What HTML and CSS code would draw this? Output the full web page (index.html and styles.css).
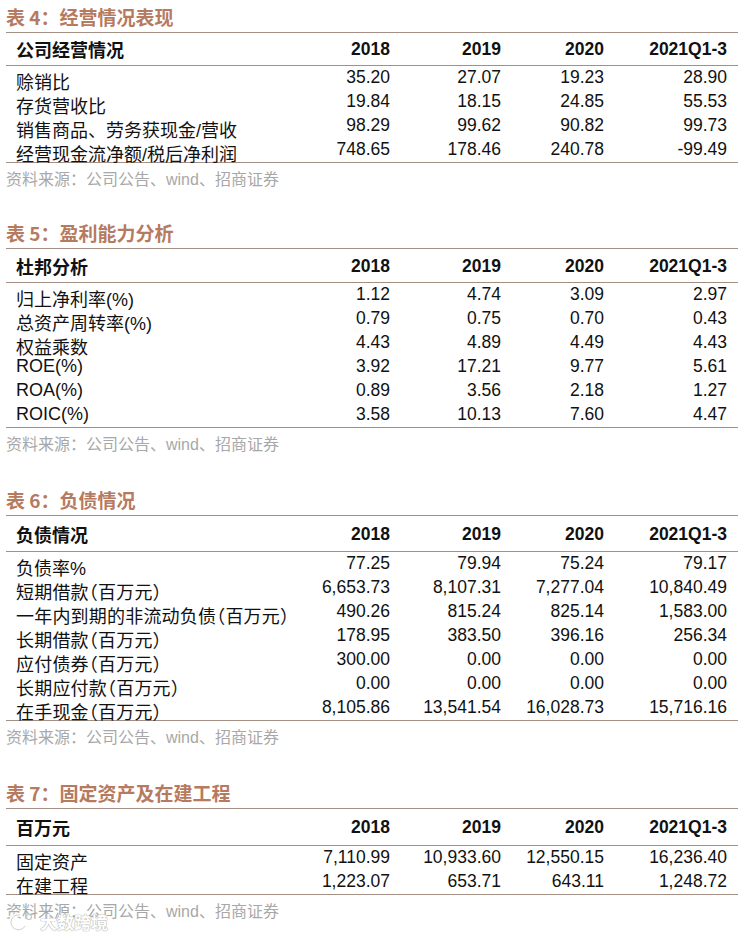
FILE: index.html
```html
<!DOCTYPE html>
<html lang="zh-CN">
<head>
<meta charset="utf-8">
<title>财务表格</title>
<link rel="stylesheet" href="styles.css">
</head>
<body>
<div class="page">

  <section class="block t4">
    <h2 class="title">表 4：经营情况表现</h2>
    <div class="table">
      <div class="row head"><div class="label">公司经营情况</div><div class="num">2018</div><div class="num">2019</div><div class="num">2020</div><div class="num">2021Q1-3</div></div>
      <div class="row"><div class="label cjk">赊销比</div><div class="num">35.20</div><div class="num">27.07</div><div class="num">19.23</div><div class="num">28.90</div></div>
      <div class="row"><div class="label cjk">存货营收比</div><div class="num">19.84</div><div class="num">18.15</div><div class="num">24.85</div><div class="num">55.53</div></div>
      <div class="row"><div class="label cjk">销售商品、劳务获现金/营收</div><div class="num">98.29</div><div class="num">99.62</div><div class="num">90.82</div><div class="num">99.73</div></div>
      <div class="row"><div class="label cjk">经营现金流净额/税后净利润</div><div class="num">748.65</div><div class="num">178.46</div><div class="num">240.78</div><div class="num">-99.49</div></div>
    </div>
    <p class="source">资料来源：公司公告、wind、招商证券</p>
  </section>

  <section class="block t5">
    <h2 class="title">表 5：盈利能力分析</h2>
    <div class="table">
      <div class="row head"><div class="label">杜邦分析</div><div class="num">2018</div><div class="num">2019</div><div class="num">2020</div><div class="num">2021Q1-3</div></div>
      <div class="row"><div class="label cjk">归上净利率(%)</div><div class="num">1.12</div><div class="num">4.74</div><div class="num">3.09</div><div class="num">2.97</div></div>
      <div class="row"><div class="label cjk">总资产周转率(%)</div><div class="num">0.79</div><div class="num">0.75</div><div class="num">0.70</div><div class="num">0.43</div></div>
      <div class="row"><div class="label cjk">权益乘数</div><div class="num">4.43</div><div class="num">4.89</div><div class="num">4.49</div><div class="num">4.43</div></div>
      <div class="row"><div class="label">ROE(%)</div><div class="num">3.92</div><div class="num">17.21</div><div class="num">9.77</div><div class="num">5.61</div></div>
      <div class="row"><div class="label">ROA(%)</div><div class="num">0.89</div><div class="num">3.56</div><div class="num">2.18</div><div class="num">1.27</div></div>
      <div class="row"><div class="label">ROIC(%)</div><div class="num">3.58</div><div class="num">10.13</div><div class="num">7.60</div><div class="num">4.47</div></div>
    </div>
    <p class="source">资料来源：公司公告、wind、招商证券</p>
  </section>

  <section class="block t6">
    <h2 class="title">表 6：负债情况</h2>
    <div class="table">
      <div class="row head"><div class="label">负债情况</div><div class="num">2018</div><div class="num">2019</div><div class="num">2020</div><div class="num">2021Q1-3</div></div>
      <div class="row"><div class="label cjk">负债率%</div><div class="num">77.25</div><div class="num">79.94</div><div class="num">75.24</div><div class="num">79.17</div></div>
      <div class="row"><div class="label cjk paren">短期借款（百万元）</div><div class="num">6,653.73</div><div class="num">8,107.31</div><div class="num">7,277.04</div><div class="num">10,840.49</div></div>
      <div class="row"><div class="label cjk paren">一年内到期的非流动负债（百万元）</div><div class="num">490.26</div><div class="num">815.24</div><div class="num">825.14</div><div class="num">1,583.00</div></div>
      <div class="row"><div class="label cjk paren">长期借款（百万元）</div><div class="num">178.95</div><div class="num">383.50</div><div class="num">396.16</div><div class="num">256.34</div></div>
      <div class="row"><div class="label cjk paren">应付债券（百万元）</div><div class="num">300.00</div><div class="num">0.00</div><div class="num">0.00</div><div class="num">0.00</div></div>
      <div class="row"><div class="label cjk paren">长期应付款（百万元）</div><div class="num">0.00</div><div class="num">0.00</div><div class="num">0.00</div><div class="num">0.00</div></div>
      <div class="row"><div class="label cjk paren">在手现金（百万元）</div><div class="num">8,105.86</div><div class="num">13,541.54</div><div class="num">16,028.73</div><div class="num">15,716.16</div></div>
    </div>
    <p class="source">资料来源：公司公告、wind、招商证券</p>
  </section>

  <section class="block t7">
    <h2 class="title">表 7：固定资产及在建工程</h2>
    <div class="table">
      <div class="row head"><div class="label">百万元</div><div class="num">2018</div><div class="num">2019</div><div class="num">2020</div><div class="num">2021Q1-3</div></div>
      <div class="row"><div class="label cjk">固定资产</div><div class="num">7,110.99</div><div class="num">10,933.60</div><div class="num">12,550.15</div><div class="num">16,236.40</div></div>
      <div class="row"><div class="label cjk">在建工程</div><div class="num">1,223.07</div><div class="num">653.71</div><div class="num">643.11</div><div class="num">1,248.72</div></div>
    </div>
    <p class="source">资料来源：公司公告、wind、招商证券</p>
  </section>

  <div class="watermark">
    <svg class="wm-icon" width="26" height="20" viewBox="0 0 26 20" aria-hidden="true">
      <path d="M12 3 A7.5 7.5 0 1 0 17 14" fill="none" stroke="#ffffff" stroke-width="4"/>
      <path d="M12 3 A7.5 7.5 0 1 0 17 14" fill="none" stroke="#cfcfcf" stroke-width="1"/>
      <circle cx="21" cy="5" r="2.5" fill="#ffffff" stroke="#c8c8c8" stroke-width="1.2"/>
    </svg>
    <span class="wm-text">大数跨境</span>
  </div>
</div>
</body>
</html>
```

FILE: styles.css
```css
html, body {
  margin: 0;
  padding: 0;
  background: #ffffff;
}

.page {
  position: relative;
  width: 732px;
  min-height: 937px;
  padding: 2px 10px 0 6px;
  color: #111111;
}

.block + .block {
  margin-top: 23px;
}

.block.t5 {
  margin-top: 21px;
}

.title {
  margin: 0;
  height: 30px;
  line-height: 30px;
  font-family: "Noto Sans CJK SC", sans-serif;
  font-size: 19px;
  font-weight: 700;
  color: #b67a5f;
  white-space: nowrap;
}

.table {
  border-top: 1px solid #a38f84;
  border-bottom: 1px solid #a38f84;
}

.row {
  display: grid;
  grid-template-columns: 1fr 100px 111px 103px 123px;
  padding: 0 11px 0 10px;
  height: 24px;
  align-items: start;
}

.row.head {
  align-items: center;
  border-bottom: 1px solid #a38f84;
}

.t4 .head { height: 32px; }
.t5 .head { height: 33px; }
.t6 .head { height: 35px; }
.t7 .head { height: 36px; }

.label {
  font-family: "Liberation Sans", "Noto Sans CJK SC", sans-serif;
  font-size: 18px;
  line-height: 22px;
  white-space: nowrap;
}

.label.cjk {
  padding-top: 6px;
}

.label.paren {
  font-feature-settings: "halt";
  letter-spacing: 0.2px;
}

.num {
  font-family: "Liberation Sans", Arial, sans-serif;
  font-size: 17.5px;
  line-height: 22px;
  text-align: right;
  white-space: nowrap;
}

.head .label {
  font-family: "Noto Sans CJK SC", sans-serif;
  font-weight: 700;
  font-size: 18px;
}

.head .num {
  font-weight: 700;
}

.source {
  margin: 0;
  height: 34px;
  line-height: 34px;
  font-family: "Liberation Sans", "Noto Sans CJK SC", sans-serif;
  font-size: 16px;
  color: #a8a8a8;
  white-space: nowrap;
}

.watermark {
  position: absolute;
  left: 8px;
  top: 912px;
  display: flex;
  align-items: center;
  gap: 6px;
}

.wm-text {
  font-family: "Noto Sans CJK SC", sans-serif;
  font-size: 17px;
  font-weight: 700;
  color: #ffffff;
  text-shadow: 0 0 1px #b0b0b0, 0 0 1px #b0b0b0, 0 0 1px #b0b0b0;
  line-height: 20px;
}
```
